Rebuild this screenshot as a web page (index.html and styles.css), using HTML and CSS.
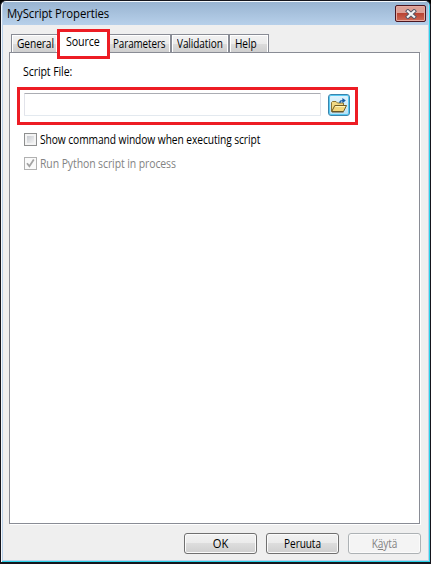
FILE: index.html
```html
<!DOCTYPE html>
<html lang="fi">
<head>
<meta charset="utf-8">
<title>MyScript Properties</title>
<link rel="stylesheet" href="styles.css">
</head>
<body>
<div class="window">
  <header class="titlebar">
    <span class="title">MyScript Properties</span>
    <button class="close" aria-label="Close">
      <svg width="12" height="10" viewBox="0 0 12 10"><path d="M2.9 2.2 9.1 7.8M9.1 2.2 2.9 7.8" stroke="#535666" stroke-width="4" stroke-linecap="square"/><path d="M2.9 2.2 9.1 7.8M9.1 2.2 2.9 7.8" stroke="#f5f5f5" stroke-width="2.2" stroke-linecap="square"/></svg>
    </button>
  </header>
  <main class="body">
    <nav class="tabs">
      <span class="tab general"><span class="t-general">General</span></span>
      <span class="tab source"><span class="t-source">Source</span></span>
      <span class="tab parameters"><span class="t-parameters">Parameters</span></span>
      <span class="tab validation"><span class="t-validation">Validation</span></span>
      <span class="tab help"><span class="t-help">Help</span></span>
    </nav>
    <section class="panel">
      <label class="file-label">Script File:</label>
      <div class="file-row">
        <span class="field"></span>
        <button class="browse" aria-label="Browse">
          <svg width="18" height="17" viewBox="0 0 18 17">
            <path d="M1.5 14.5V5.5L2.5 4.5H6L7.5 6H13.5V9" fill="#f3da85" stroke="#8a7334"/>
            <path d="M1.7 14.5 4.8 8.5H16.5L13.5 14.5Z" fill="#f3d67c" stroke="#6e5a25"/>
            <path d="M5.5 9.5H15" stroke="#fff5bd"/>
            <path d="M2 15H13.5" stroke="#62542f"/>
            <path d="M10 6C9.8 4 10.8 3.6 13 3.6" fill="none" stroke="#1559a0" stroke-width="1.4"/>
            <path d="M12.4 1 15.8 3.6 12.4 6.2Z" fill="#1559a0"/>
          </svg>
        </button>
      </div>
      <div class="check"><span class="box"></span><span class="t-show">Show command window when executing script</span></div>
      <div class="check disabled"><span class="box"><svg width="11" height="11" viewBox="0 0 11 11"><path d="M2 5.2 4.4 8.2 8.8 1.6" fill="none" stroke="#a3a3a3" stroke-width="1.8"/></svg></span><span class="t-run">Run Python script in process</span></div>
    </section>
    <footer class="actions">
      <button class="btn"><span class="t-ok">OK</span></button>
      <button class="btn"><span class="t-peruuta">Peruuta</span></button>
      <button class="btn off" disabled><span class="t-kayta">K<u>ä</u>ytä</span></button>
    </footer>
  </main>
</div>
</body>
</html>
```
FILE: styles.css
```css
* { box-sizing: border-box; }
body { margin: 0; background: #000; font: 12px/16px "Open Sans", "Noto Sans", sans-serif; color: #000; letter-spacing: -0.1px; }
button { font: inherit; letter-spacing: inherit; color: inherit; padding: 0; }
svg { display: block; fill: none; }
span { white-space: nowrap; }
.window { width: 431px; height: 564px; border: 1px solid #15151c; border-bottom-width: 2px; border-radius: 6px 6px 0 0; background: #b9d1ea; box-shadow: inset 1px 1px #f4f8fc, inset -1px -1px #29d3e8; padding: 1px 2px 2px; overflow: hidden; }
.titlebar { height: 23px; display: flex; justify-content: space-between; background: linear-gradient(#99b4d1, #b7d0ea); padding: 0 2px 0 4px; }
.title { padding-top: 4px; transform: scaleX(0.945); transform-origin: 0 50%; }
.close { width: 31px; height: 17px; margin-top: 3px; border: 1px solid #4b1620; border-radius: 2px; box-shadow: inset 0 0 0 1px #e7aaa0; background: linear-gradient(#dda096 0 45%, #b94433 50%, #cf6a56); display: flex; align-items: center; justify-content: center; }
.body { height: 535px; background: #efefef; padding: 9px 6px 0; display: flex; flex-direction: column; }
.tabs { height: 18px; display: flex; align-items: flex-start; padding-left: 2px; }
.tab { height: 18px; border: 1px solid #898c95; border-bottom: 0; box-shadow: inset 1px 1px #fff, inset -1px 0 #fff; background: linear-gradient(#f2f2f2, #ebebeb 50%, #dcdcdc 52%, #cfcfcf); padding: 1px 0 0 5px; flex: none; }
.tab span, .t-show, .t-run { display: inline-block; transform-origin: 0 50%; }
.t-general { transform: scaleX(0.85); }
.t-source { transform: scaleX(0.89); }
.t-parameters { transform: scaleX(0.82); }
.t-validation { transform: scaleX(0.835); }
.t-help { transform: scaleX(0.84); }
.t-show { transform: scaleX(0.854); }
.t-run { transform: scaleX(0.871); }
.general { width: 47px; }
.source { width: 53px; height: 30px; margin: -5px -2px 0 -1px; border: 3px solid #ed1c24; box-shadow: none; background: #fff; padding: 2px 0 0 6px; position: relative; z-index: 1; }
.parameters { width: 63px; padding-left: 4px; }
.validation { width: 58px; }
.help { width: 40px; }
.panel { width: 411px; height: 472px; border: 1px solid #898c95; background: #fff; box-shadow: 1px 1px #fff; padding: 11px 0 0 7px; flex: none; }
.file-label { display: block; margin-left: 6px; height: 23px; transform: scaleX(0.88); transform-origin: 0 50%; }
.file-row { width: 341px; height: 38px; border: 3px solid #ed1c24; display: flex; align-items: flex-start; padding: 3px 0 0 4px; }
.field { width: 297px; height: 23px; border: 1px solid #e2e3ea; border-top-color: #abadb3; border-bottom-color: #e3e9ef; border-radius: 1px; }
.browse { width: 22px; height: 22px; margin: 1px 0 0 7px; border: 1px solid #3984ad; border-radius: 3px; box-shadow: inset 0 0 0 1px #58c9f2; background: linear-gradient(#e2f4fd, #b7e1f5); display: flex; align-items: center; justify-content: center; }
.check { display: flex; height: 16px; margin: 6px 0 1px 7px; gap: 3px; align-items: center; }
.check span + span { position: relative; top: 1px; }
.disabled { margin-top: 8px; color: #838383; }
.box { flex: none; width: 13px; height: 13px; border: 1px solid #8e8f8f; background: linear-gradient(135deg, #c8cbd0, #f3f3f3) 2px 2px / 7px 7px no-repeat #f4f4f4; }
.disabled .box { border-color: #b1b1b1; background: #fafafa; }
.actions { display: flex; gap: 9px; padding: 9px 0 0 175px; }
.btn { flex: none; width: 73px; height: 21px; border: 1px solid #707070; border-radius: 3px; box-shadow: inset 0 0 0 1px #fbfbfb; background: linear-gradient(#f2f2f2, #ebebeb 49%, #dddddd 50%, #cfcfcf); }
.btn span { display: block; line-height: 18px; }
.t-ok { transform: scaleX(0.93); }
.t-peruuta, .t-kayta { transform: scaleX(0.84); }
.off { color: #838383; border-color: #adb2b5; background: #f4f4f4; }
```
